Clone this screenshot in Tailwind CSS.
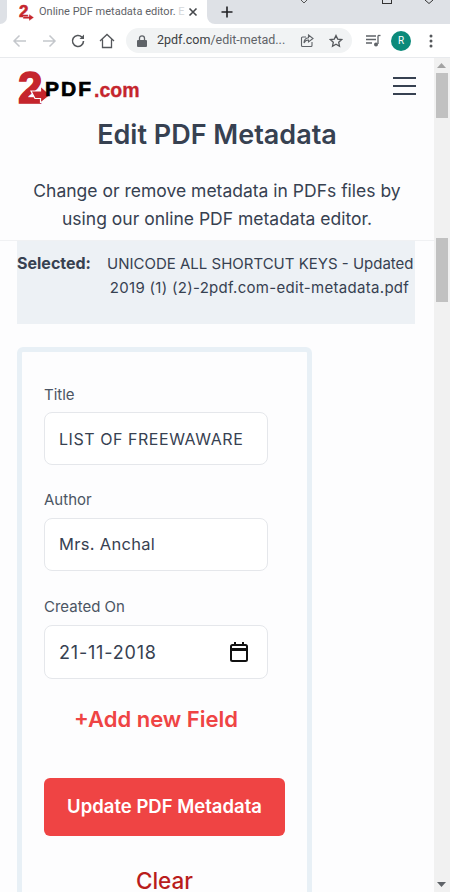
<!doctype html>
<html><head><meta charset="utf-8"><script src="https://cdn.jsdelivr.net/npm/@tailwindcss/browser@4"></script></head>
<body class="m-0 bg-white">
<div class="w-[450px] h-[892px] overflow-hidden flex flex-col font-['Inter',sans-serif] text-[#374151]">
  <!-- tab strip -->
  <div class="h-6 shrink-0 bg-white flex relative">
    <div class="h-6 w-[7px] bg-[#dee1e6] rounded-br-lg"></div>
    <div class="h-6 w-[200px] bg-white flex items-center pl-3 pr-2 font-['Roboto',sans-serif] text-[11px] text-[#5f6368]">
      <div class="w-[15px] h-4 shrink-0 relative font-['Liberation_Sans',sans-serif] font-bold text-[17px] leading-4 text-[#c5252d] [-webkit-text-stroke:.6px_#c5252d]">2<svg class="absolute left-[4px] top-[10px] w-[11px] h-[7px]" viewBox="0 0 11 7" fill="#c5252d"><path d="M0 2.500h6V0l5 3.500L6 7V4.800H0z" stroke="#fff" stroke-width=".4"/></svg></div>
      <span class="ml-[5px] whitespace-nowrap">Online PDF metadata editor. <span class="text-[#d5d7da]">E</span></span>
      <svg class="w-3 h-3 ml-auto" viewBox="0 0 12 12" fill="none" stroke="#45484c" stroke-width="1.6"><path d="M2.500 2.500l7 7M9.500 2.500l-7 7"/></svg>
    </div>
    <div class="flex-1 h-6 bg-[#dee1e6] rounded-bl-lg flex items-center pl-[14px]">
      <svg class="w-3 h-3" viewBox="0 0 12 12" fill="none" stroke="#202124" stroke-width="1.6"><path d="M6 .5v11M.5 6h11"/></svg>
    </div>
    <svg class="absolute left-[299px] top-0 w-[10px] h-[4px]" viewBox="0 0 10 4" fill="none" stroke="#555" stroke-width="1"><path d="M2 0l3 3 3-3"/></svg>
    <div class="absolute left-[382px] top-0 w-[10px] h-[4px] border-x border-b border-[#333]"></div>
    <svg class="absolute left-[424px] top-0 w-[10px] h-[4px]" viewBox="0 0 10 4" fill="none" stroke="#333" stroke-width="1"><path d="M1 0l4 3.500 4-3.500"/></svg>
  </div>
  <!-- toolbar -->
  <div class="h-[34px] shrink-0 bg-white border-b border-[#e8eaed] flex items-center relative">
    <svg class="w-4 h-4 ml-[12px]" viewBox="0 0 16 16" fill="none" stroke="#c4c7cc" stroke-width="1.5"><path d="M14 8H2M7.500 2.500L2 8l5.500 5.500"/></svg>
    <svg class="w-4 h-4 ml-[13px]" viewBox="0 0 16 16" fill="none" stroke="#c4c7cc" stroke-width="1.5"><path d="M2 8h12M8.500 2.500L14 8l-5.500 5.500"/></svg>
    <svg class="w-4 h-4 ml-[13px]" viewBox="0 0 16 16" fill="none" stroke="#54575b" stroke-width="1.600"><path d="M13.500 8a5.500 5.500 0 1 1-1.600-3.900"/><path d="M14 1.500v4.500H9.500z" fill="#54575b" stroke="none"/></svg>
    <svg class="w-[16px] h-[16px] ml-[13px]" viewBox="0 0 16 16" fill="none" stroke="#54575b" stroke-width="1.300"><path d="M1 8l7-6.500L15 8M3.500 6.500v8h9v-8"/></svg>
    <div class="ml-[11px] w-[226px] h-[25px] rounded-full bg-[#f1f3f4] flex items-center pl-[11px]">
      <svg class="w-[10px] h-[12px] shrink-0" viewBox="0 0 10 12"><path fill="#5f6368" d="M1 5h8a1 1 0 0 1 1 1v5a1 1 0 0 1-1 1H1a1 1 0 0 1-1-1V6a1 1 0 0 1 1-1z"/><path fill="none" stroke="#5f6368" stroke-width="1.300" d="M2.500 5V3.300a2.500 2.500 0 0 1 5 0V5"/></svg>
      <span class="ml-[10px] w-[128px] whitespace-nowrap font-['Roboto',sans-serif] text-[12.500px] text-[#3c4043]">2pdf.com<span class="text-[#5f6368]">/edit-metad...</span></span>
      <svg class="w-[14px] h-[14px] ml-[15px] shrink-0" viewBox="0 0 14 14" fill="none" stroke="#5f6368" stroke-width="1.100"><path d="M12 8v3.500a1 1 0 0 1-1 1H2.500a1 1 0 0 1-1-1V4a1 1 0 0 1 1-1H6"/><path d="M8.500 1L13 4.500 8.500 8V6C6 6 4.800 7 4 9c0-3 1.500-5 4.500-5.300z"/></svg>
      <svg class="w-[14px] h-[14px] ml-[15px] shrink-0" viewBox="0 0 14 14" fill="none" stroke="#54575b" stroke-width="1.300"><path d="M7 1.500l1.700 3.600 3.900.5-2.900 2.700.8 3.900L7 10.300 3.500 12.200l.8-3.900L1.400 5.600l3.900-.5z"/></svg>
    </div>
    <svg class="w-[16px] h-[14px] ml-[13px]" viewBox="0 0 16 14" fill="none" stroke="#5f6368" stroke-width="1.300"><path d="M1 2h10M1 5.500h10M1 9h6M13 1.500V10"/><circle cx="11" cy="10.500" r="2" fill="#5f6368" stroke="none"/><path d="M13 1.500h2.500"/></svg>
    <div class="ml-[10px] w-5 h-5 rounded-full bg-[#0b8a7a] text-white text-[10px] font-['Roboto',sans-serif] flex items-center justify-center">R</div>
    <svg class="w-[4px] h-[14px] ml-[18px]" viewBox="0 0 4 14" fill="#54575b"><circle cx="2" cy="2" r="1.500"/><circle cx="2" cy="7" r="1.500"/><circle cx="2" cy="12" r="1.500"/></svg>
  </div>
  <!-- viewport -->
  <div class="flex-1 min-h-0 flex relative">
    <main class="w-[434px] bg-[#fdfdfe] overflow-hidden">
      <header class="h-[183px] border-b border-[#f0f1f3] flex flex-col">
        <div class="h-[55px] pl-[17px] pr-[18px] flex items-center justify-between shrink-0">
          <div class="relative w-[124px] h-[36px]">
            <span class="absolute left-[1px] top-[-5px] font-['Liberation_Sans',sans-serif] font-black text-[#c5252d] text-[44px] leading-[50px] [-webkit-text-stroke:1.500px_#c5252d]">2</span>
            <svg class="absolute left-[13px] top-[18px] w-[21px] h-[17px]" viewBox="0 0 21 17" fill="#c5252d"><path d="M1 5h9.500V0L20.500 9 10.500 17v-4.500H5z" stroke="#fdfdfe" stroke-width="1.200"/></svg>
            <span class="absolute left-[28px] top-[8px] font-['Liberation_Sans',sans-serif] font-bold text-[21px] leading-[26px] tracking-[2px] text-black [-webkit-text-stroke:.7px_black]">PDF</span>
            <span class="absolute left-[77px] top-[9px] font-['Liberation_Sans',sans-serif] font-bold text-[19.500px] leading-[26px] text-[#c5252d] [-webkit-text-stroke:.3px_#c5252d]">.com</span>
          </div>
          <div class="w-[23px] flex flex-col gap-[6px] mt-[1px]">
            <div class="h-[2px] bg-[#374151]"></div><div class="h-[2px] bg-[#374151]"></div><div class="h-[2px] bg-[#374151]"></div>
          </div>
        </div>
        <h1 class="mt-[4px] text-center text-[27px] leading-[36px] font-semibold text-[#374151]">Edit PDF Metadata</h1>
        <p class="mt-[24px] mx-auto w-[400px] text-center text-[17.500px] leading-[28px] text-[#374151]">Change or remove metadata in PDFs files by using our online PDF metadata editor.</p>
      </header>
      <div class="ml-[17px] w-[398px] h-[83px] bg-[#edf1f5] flex text-[15px] leading-[23.500px] pt-[11px]">
        <span class="font-bold text-[16px] w-[90px] shrink-0">Selected:</span>
        <span class="text-center w-[305px] whitespace-nowrap text-[#374151]">UNICODE ALL SHORTCUT KEYS - Updated<br><span class="tracking-[.3px]">2019 (1) (2)-2pdf.com-edit-metadata.pdf</span></span>
      </div>
      <form class="ml-[17px] mt-[23px] w-[295px] h-[620px] border-[5px] border-[#e8f0f6] rounded-md px-[22px] pt-[32px]">
        <label class="block text-[15px] leading-[22px] text-[#4b5563]">Title</label>
        <div class="mt-[6px] h-[53px] w-[224px] bg-white border border-[#e5e7eb] rounded-lg flex items-center pl-[14px] text-[16px] tracking-[.55px] whitespace-nowrap">LIST OF FREEWAWARE</div>
        <label class="block mt-[24px] text-[15px] leading-[22px] text-[#4b5563]">Author</label>
        <div class="mt-[7px] h-[53px] w-[224px] bg-white border border-[#e5e7eb] rounded-lg flex items-center pl-[14px] text-[16.500px] tracking-[.3px]">Mrs. Anchal</div>
        <label class="block mt-[25px] text-[15px] leading-[22px] text-[#4b5563]">Created On</label>
        <div class="mt-[7px] h-[54px] w-[224px] bg-white border border-[#e5e7eb] rounded-lg flex items-center pl-[14px] text-[18px] tracking-[.8px]">21-11-2018
          <svg class="w-[18px] h-[20px] ml-auto mr-[19px]" viewBox="0 0 18 20" fill="none" stroke="#111" stroke-width="2"><rect x="1" y="3" width="16" height="16" rx="1.500"/><path d="M1 7.500h16" stroke-width="3"/><path d="M5 0v3M13 0v3"/></svg>
        </div>
        <div class="mt-[25px] w-[224px] text-center text-[22px] leading-[30px] font-semibold text-[#ef4444]">+Add new Field</div>
        <button type="button" class="mt-[44px] w-[241px] h-[58px] bg-[#ef4444] rounded-md text-white text-[18.500px] font-semibold">Update PDF Metadata</button>
        <div class="mt-[35px] w-[241px] text-center text-[22.500px] leading-[20px] font-medium text-[#b91c1c]">Clear</div>
      </form>
    </main>
    <div class="w-4 shrink-0 bg-[#f1f1f1] relative">
      <svg class="absolute left-[3px] top-[5px] w-[9px] h-[5px]" viewBox="0 0 9 5" fill="#a3a3a3"><path d="M4.500 0L9 5H0z"/></svg>
      <div class="absolute left-[2px] top-[15px] w-[12px] h-[45px] bg-[#c1c1c1]"></div>
      <div class="absolute left-[2px] top-[180px] w-[12px] h-[64px] bg-[#c1c1c1]"></div>
      <svg class="absolute left-[3px] bottom-[5px] w-[9px] h-[5px]" viewBox="0 0 9 5" fill="#5f6368"><path d="M0 0h9L4.500 5z"/></svg>
    </div>
  </div>
</div>
</body></html>
